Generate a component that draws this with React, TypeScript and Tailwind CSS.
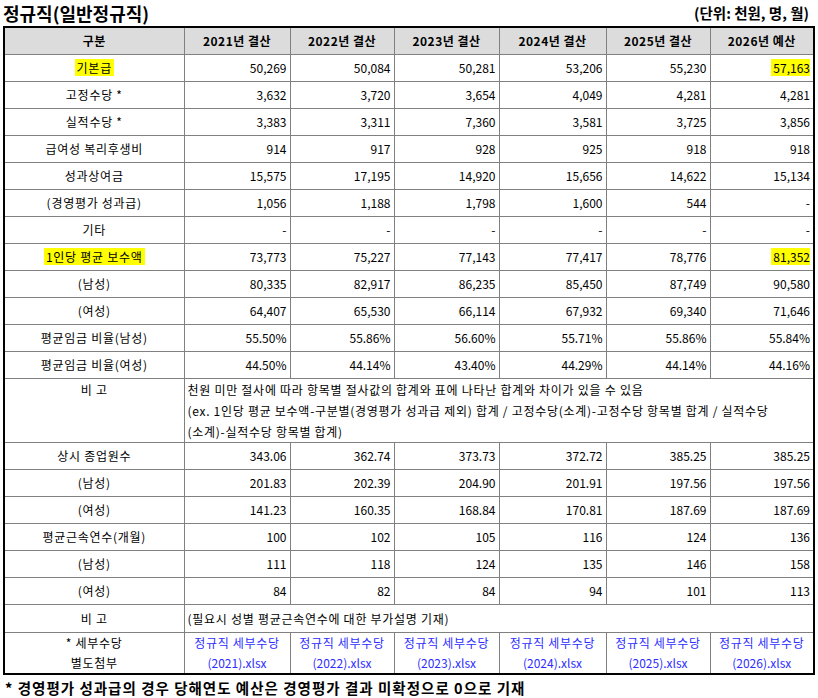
import React from "react";

const font = { fontFamily: '"Noto Sans CJK KR", "Noto Sans", sans-serif' };

type Row = { label: string; values: string[]; mark?: boolean };

const upperRows: Row[] = [
  { label: "기본급", values: ["50,269", "50,084", "50,281", "53,206", "55,230", "57,163"], mark: true },
  { label: "고정수당 *", values: ["3,632", "3,720", "3,654", "4,049", "4,281", "4,281"] },
  { label: "실적수당 *", values: ["3,383", "3,311", "7,360", "3,581", "3,725", "3,856"] },
  { label: "급여성 복리후생비", values: ["914", "917", "928", "925", "918", "918"] },
  { label: "성과상여금", values: ["15,575", "17,195", "14,920", "15,656", "14,622", "15,134"] },
  { label: "(경영평가 성과급)", values: ["1,056", "1,188", "1,798", "1,600", "544", "-"] },
  { label: "기타", values: ["-", "-", "-", "-", "-", "-"] },
  { label: "1인당 평균 보수액", values: ["73,773", "75,227", "77,143", "77,417", "78,776", "81,352"], mark: true },
  { label: "(남성)", values: ["80,335", "82,917", "86,235", "85,450", "87,749", "90,580"] },
  { label: "(여성)", values: ["64,407", "65,530", "66,114", "67,932", "69,340", "71,646"] },
  { label: "평균임금 비율(남성)", values: ["55.50%", "55.86%", "56.60%", "55.71%", "55.86%", "55.84%"] },
  { label: "평균임금 비율(여성)", values: ["44.50%", "44.14%", "43.40%", "44.29%", "44.14%", "44.16%"] },
];

const lowerRows: Row[] = [
  { label: "상시 종업원수", values: ["343.06", "362.74", "373.73", "372.72", "385.25", "385.25"] },
  { label: "(남성)", values: ["201.83", "202.39", "204.90", "201.91", "197.56", "197.56"] },
  { label: "(여성)", values: ["141.23", "160.35", "168.84", "170.81", "187.69", "187.69"] },
  { label: "평균근속연수(개월)", values: ["100", "102", "105", "116", "124", "136"] },
  { label: "(남성)", values: ["111", "118", "124", "135", "146", "158"] },
  { label: "(여성)", values: ["84", "82", "84", "94", "101", "113"] },
];

const headers = ["2021년 결산", "2022년 결산", "2023년 결산", "2024년 결산", "2025년 결산", "2026년 예산"];
const years = ["2021", "2022", "2023", "2024", "2025", "2026"];

const cell = "border border-[#808080] p-0";

function Mark({ children }: { children: React.ReactNode }) {
  return <span className="inline-block bg-[#ffff00] px-[2px] leading-[17px]">{children}</span>;
}

function DataRow({ row }: { row: Row }) {
  return (
    <tr className="h-[27px]">
      <td className={`${cell} text-center tracking-[0.06em]`}>{row.mark ? <Mark>{row.label}</Mark> : row.label}</td>
      {row.values.map((v, i) => (
        <td key={i} className={`${cell} pr-[3px] text-right`}>
          {row.mark && i === 5 ? <span className="inline-block bg-[#ffff00] pl-[2px] leading-[17px]">{v}</span> : v}
        </td>
      ))}
    </tr>
  );
}

export default function App() {
  return (
    <div className="w-[818px] h-[698px] bg-white text-black text-[12px]" style={font}>
      <div className="flex h-[26px] items-center justify-between pl-[3px] pr-[9px]">
        <h1 className="text-[18px] font-bold leading-none">정규직(일반정규직)</h1>
        <span className="text-[14.5px] font-bold leading-none">(단위: 천원, 명, 월)</span>
      </div>

      <table className="ml-[3px] w-[810px] table-fixed border-collapse border-2 border-black leading-[21px]">
        <colgroup>
          <col className="w-[180px]" />
          <col className="w-[106px]" />
          <col className="w-[104px]" />
          <col className="w-[105px]" />
          <col className="w-[107px]" />
          <col className="w-[104px]" />
          <col className="w-[104px]" />
        </colgroup>
        <thead>
          <tr className="h-[27px] bg-[#dcdcdc]">
            <th className={`${cell} font-bold tracking-[0.04em]`}>구분</th>
            {headers.map((h) => (
              <th key={h} className={`${cell} font-bold tracking-[0.04em]`}>
                {h}
              </th>
            ))}
          </tr>
        </thead>
        <tbody>
          {upperRows.map((r, i) => (
            <DataRow key={i} row={r} />
          ))}
          <tr className="h-[63px]">
            <td className={`${cell} text-center align-top tracking-[0.06em]`}>비 고</td>
            <td colSpan={6} className={`${cell} px-[3px] text-left align-top tracking-[0.06em]`}>
              천원 미만 절사에 따라 항목별 절사값의 합계와 표에 나타난 합계와 차이가 있을 수 있음
              <br />
              (ex. 1인당 평균 보수액-구분별(경영평가 성과급 제외) 합계 / 고정수당(소계)-고정수당 항목별 합계 / 실적수당
              <br />
              (소계)-실적수당 항목별 합계)
            </td>
          </tr>
          {lowerRows.map((r, i) => (
            <DataRow key={i} row={r} />
          ))}
          <tr className="h-[28px]">
            <td className={`${cell} text-center tracking-[0.06em]`}>비 고</td>
            <td colSpan={6} className={`${cell} px-[3px] text-left tracking-[0.06em]`}>
              (필요시 성별 평균근속연수에 대한 부가설명 기재)
            </td>
          </tr>
          <tr className="h-[42px]">
            <td className={`${cell} text-center leading-[20px] tracking-[0.06em]`}>
              * 세부수당
              <br />
              별도첨부
            </td>
            {years.map((y) => (
              <td key={y} className={`${cell} text-center leading-[20px] text-[#2d2dff]`}>
                <span className="tracking-[0.06em]">정규직 세부수당</span>
                <br />({y}).xlsx
              </td>
            ))}
          </tr>
        </tbody>
      </table>

      <p className="flex h-[26px] items-center pl-[5px] text-[14.5px] font-bold leading-none tracking-[0.07em]">
        * 경영평가 성과급의 경우 당해연도 예산은 경영평가 결과 미확정으로 0으로 기재
      </p>
    </div>
  );
}
